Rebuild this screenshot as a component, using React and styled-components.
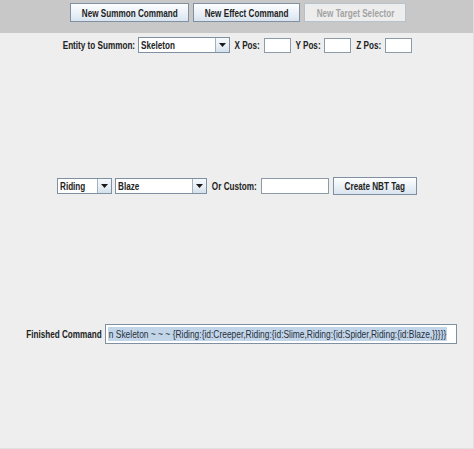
import React from "react";
import styled, { createGlobalStyle } from "styled-components";

const Global = createGlobalStyle`
  html, body { margin: 0; padding: 0; background: #eeeeee; }
  body {
    font-family: "Liberation Sans", Arial, sans-serif;
    color: #222222;
  }
`;

const Frame = styled.div`
  width: 474px;
  height: 449px;
  display: flex;
  flex-direction: column;
  background: #eeeeee;
  box-sizing: border-box;
  border-right: 1px solid #e0e0e0;
  border-bottom: 1px solid #e0e0e0;
`;

const Toolbar = styled.div`
  height: 33px;
  box-sizing: border-box;
  padding: 3px 0 0 70px;
  background: #c8c8c8;
  display: flex;
  align-items: flex-start;
  gap: 4px;
`;

/* Java-style narrow glyphs: text is drawn horizontally compressed */
const Squish = styled.span`
  display: inline-block;
  flex: none;
  white-space: nowrap;
  transform: scaleX(${(p) => p.$sx || 0.74});
  transform-origin: ${(p) => p.$origin || "center"};
`;

const Button = styled.button`
  width: ${(p) => p.$w}px;
  height: ${(p) => p.$h || 19}px;
  margin: 0 0 0 ${(p) => p.$ml || 0}px;
  padding: 0;
  flex: none;
  box-sizing: border-box;
  border: 1px solid ${(p) => (p.disabled ? "#b8c2cd" : "#7f90a3")};
  background: ${(p) =>
    p.disabled
      ? "#ededed"
      : "linear-gradient(to bottom, #fdfeff 0%, #eef3f8 45%, #d9e4ef 100%)"};
  color: ${(p) => (p.disabled ? "#a3a3a3" : "#222222")};
  font-family: inherit;
  font-weight: bold;
  font-size: 11px;
  display: flex;
  align-items: center;
  justify-content: center;
  overflow: visible;
`;

const Row = styled.div`
  display: flex;
  align-items: center;
  margin-top: ${(p) => p.$top}px;
  height: ${(p) => p.$h}px;
  padding-left: ${(p) => p.$left}px;
`;

const Label = styled.span`
  width: ${(p) => p.$w}px;
  flex: none;
  display: flex;
  justify-content: center;
  font-weight: bold;
  font-size: 11px;
  margin: 0 ${(p) => p.$mr ?? 3}px 0 ${(p) => p.$ml ?? 3}px;
`;

const Combo = styled.div`
  width: ${(p) => p.$w}px;
  height: ${(p) => p.$h || 16}px;
  flex: none;
  box-sizing: border-box;
  border: 1px solid #7f90a3;
  background: #ffffff;
  display: flex;
  margin-right: ${(p) => p.$mr || 0}px;
`;

const ComboValue = styled.div`
  flex: 1;
  font-weight: bold;
  font-size: 11px;
  padding-left: 2px;
  display: flex;
  align-items: center;
  overflow: hidden;
`;

const ArrowBox = styled.div`
  width: 13px;
  border-left: 1px solid #a3b0bd;
  background: linear-gradient(to bottom, #f6f9fc 0%, #e6edf4 60%, #d4e0ec 100%);
  display: flex;
  align-items: center;
  justify-content: center;
`;

const Field = styled.div`
  width: ${(p) => p.$w}px;
  height: ${(p) => p.$h || 15}px;
  flex: none;
  box-sizing: border-box;
  border: 1px solid #8d9aa8;
  background: #ffffff;
`;

const OutputField = styled.div`
  width: 352px;
  height: 20px;
  flex: none;
  box-sizing: border-box;
  border: 1px solid #7f90a3;
  background: #ffffff;
  display: flex;
  align-items: center;
  padding-left: 2px;
  overflow: hidden;
`;

const Selected = styled(Squish)`
  background: #c3d5e9;
  font-size: 11px;
  color: #26303a;
  line-height: 14px;
  padding: 0 1px;
`;

const Arrow = () => (
  <svg width="7" height="4" viewBox="0 0 7 4">
    <path d="M0 0 H7 L3.5 4 Z" fill="#1a1a1a" />
  </svg>
);

const Dropdown = ({ value, w, mr }) => (
  <Combo $w={w} $mr={mr}>
    <ComboValue>
      <Squish $origin="left">{value}</Squish>
    </ComboValue>
    <ArrowBox>
      <Arrow />
    </ArrowBox>
  </Combo>
);

const COMMAND =
  "n Skeleton ~ ~ ~ {Riding:{id:Creeper,Riding:{id:Slime,Riding:{id:Spider,Riding:{id:Blaze,}}}}}";

export default function App() {
  return (
    <>
      <Global />
      <Frame>
        <Toolbar>
          <Button $w={119}>
            <Squish>New Summon Command</Squish>
          </Button>
          <Button $w={107}>
            <Squish>New Effect Command</Squish>
          </Button>
          <Button $w={102} disabled>
            <Squish>New Target Selector</Squish>
          </Button>
        </Toolbar>

        <Row $top={4} $h={16} $left={63}>
          <Label $w={72} $ml={0}>
            <Squish>Entity to Summon:</Squish>
          </Label>
          <Dropdown value="Skeleton" w={92} />
          <Label $w={28}>
            <Squish>X Pos:</Squish>
          </Label>
          <Field $w={27} />
          <Label $w={26} $ml={4}>
            <Squish>Y Pos:</Squish>
          </Label>
          <Field $w={27} />
          <Label $w={27} $ml={4}>
            <Squish>Z Pos:</Squish>
          </Label>
          <Field $w={27} />
        </Row>

        <Row $top={124} $h={18} $left={57}>
          <Dropdown value="Riding" w={55} mr={3} />
          <Dropdown value="Blaze" w={92} />
          <Label $w={45} $ml={5} $mr={4}>
            <Squish>Or Custom:</Squish>
          </Label>
          <Field $w={68} $h={16} />
          <Button $w={84} $h={18} $ml={4}>
            <Squish>Create NBT Tag</Squish>
          </Button>
        </Row>

        <Row $top={129} $h={20} $left={28}>
          <Label $w={73} $ml={0} $mr={4}>
            <Squish>Finished Command</Squish>
          </Label>
          <OutputField>
            <Selected $origin="left" $sx={0.765}>
              {COMMAND}
            </Selected>
          </OutputField>
        </Row>
      </Frame>
    </>
  );
}
